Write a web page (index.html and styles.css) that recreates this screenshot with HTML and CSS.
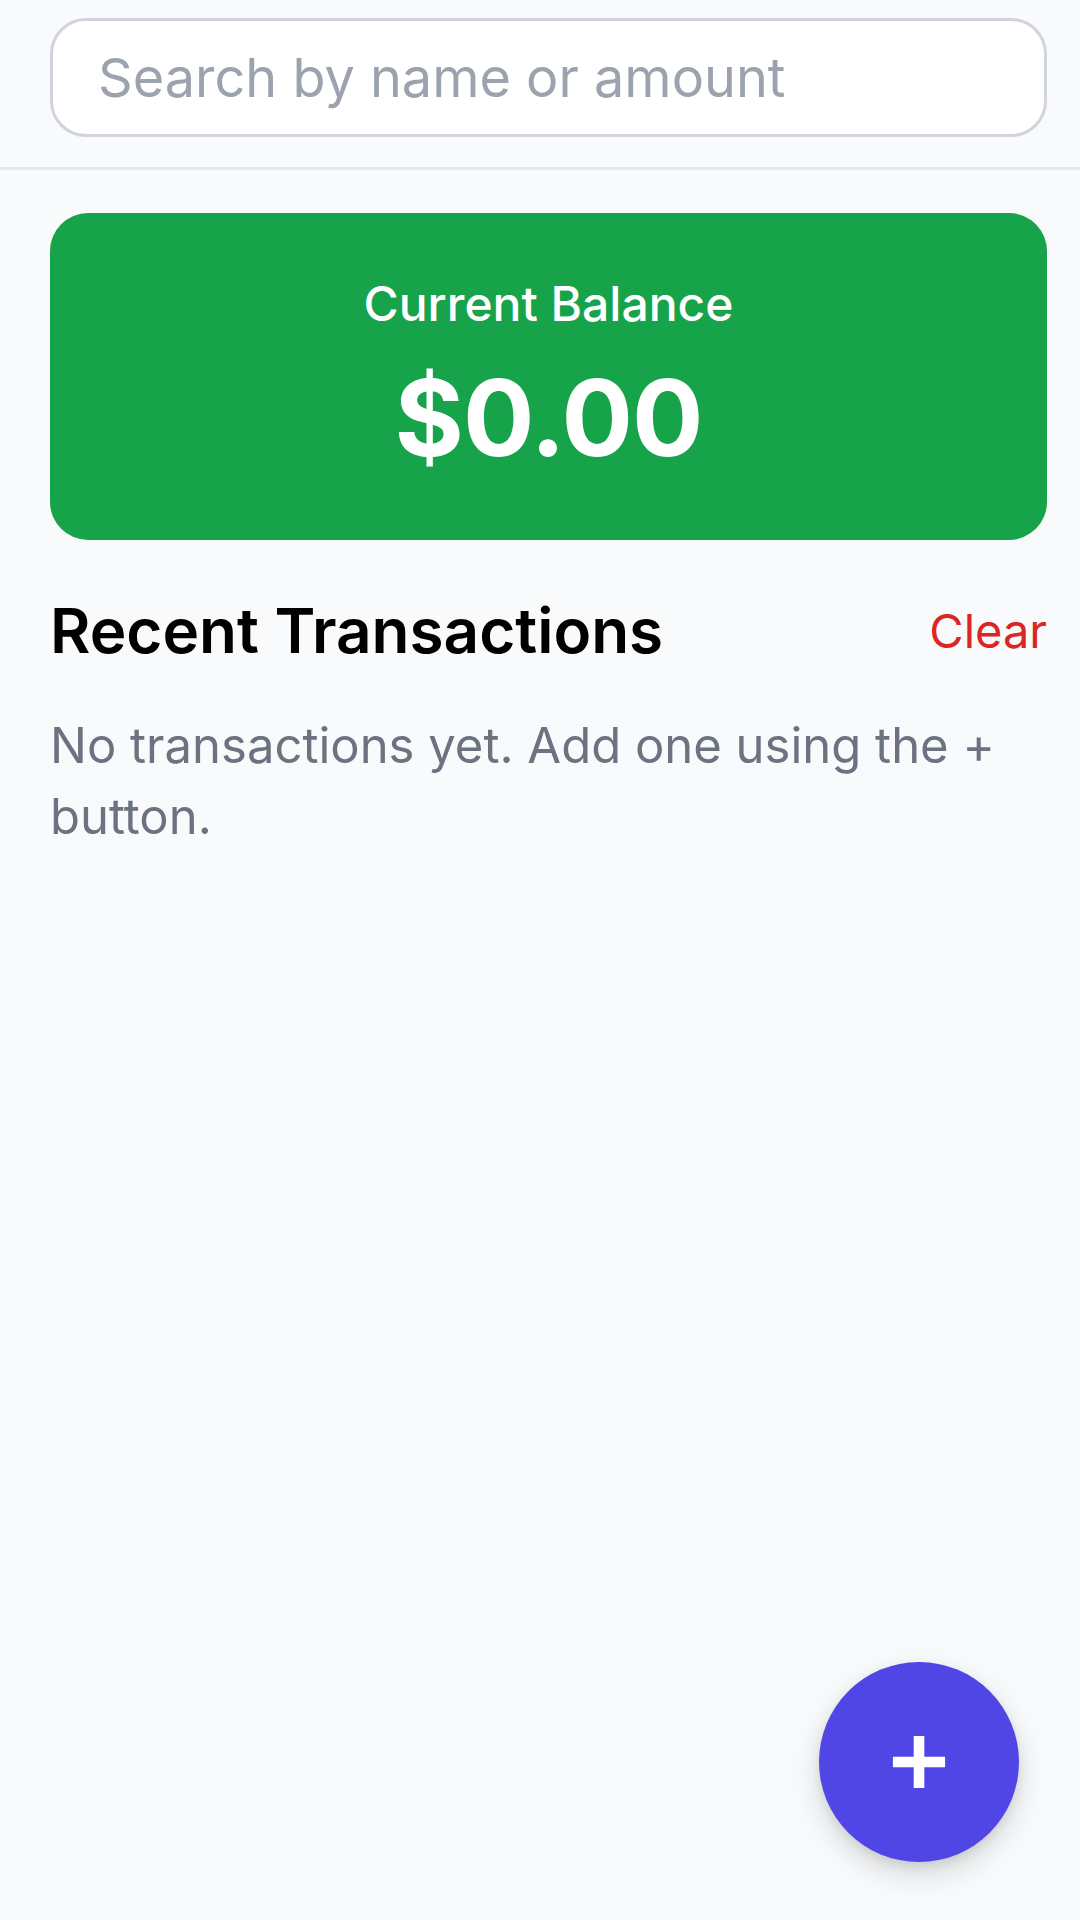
FILE: index.html
```html
<!DOCTYPE html>
<html lang="en">
<head>
<meta charset="utf-8">
<title>Balance</title>
<link rel="stylesheet" href="styles.css">
</head>
<body>
<header class="header">
  <input class="search" type="text" placeholder="Search by name or amount">
</header>
<main class="main">
  <section class="balance-card">
    <div class="balance-label">Current Balance</div>
    <div class="balance-amount">$0.00</div>
  </section>
  <div class="section-head">
    <h2 class="section-title">Recent Transactions</h2>
    <button class="clear-btn" type="button">Clear</button>
  </div>
  <p class="empty">No transactions yet. Add one using the + button.</p>
</main>
<button class="fab" type="button" aria-label="Add transaction">
  <svg viewBox="0 0 60 60" width="60" height="60" aria-hidden="true">
    <path d="M30 3 V57 M3 30 H57" stroke="#ffffff" stroke-width="11" fill="none"/>
  </svg>
</button>
</body>
</html>
```

FILE: styles.css
```css
* { box-sizing: border-box; }
html, body { margin: 0; padding: 0; }
body {
  width: 1080px;
  height: 1920px;
  background: #f9fafb;
  font-family: Inter, "Noto Sans", "Liberation Sans", sans-serif;
  color: #111827;
  overflow: hidden;
  position: relative;
}
.header {
  padding: 18px 33px 30px 50px;
  border-bottom: 3px solid #e5e7eb;
  background: #f9fafb;
}
.search {
  display: block;
  width: 100%;
  height: 119px;
  border: 3px solid #d1d5db;
  border-radius: 36px;
  background: #ffffff;
  padding: 0 45px;
  font-family: inherit;
  font-size: 54px;
  color: #111827;
  outline: none;
}
.search::placeholder { color: #9ca3af; }
.main {
  padding: 43px 33px 0 50px;
}
.balance-card {
  background: #16a34a;
  border-radius: 38px;
  padding: 49px 20px 62px;
  color: #ffffff;
  display: flex;
  flex-direction: column;
  align-items: center;
  gap: 12px;
}
.balance-label {
  font-size: 48px;
  line-height: 84px;
  font-weight: 500;
}
.balance-amount {
  font-size: 106px;
  line-height: 120px;
  font-weight: 700;
  letter-spacing: -1px;
}
.section-head {
  margin-top: 46px;
  display: flex;
  align-items: center;
  justify-content: space-between;
  height: 90px;
}
.section-title {
  margin: 0;
  font-size: 62px;
  line-height: 84px;
  font-weight: 600;
  color: #000000;
}
.clear-btn {
  border: 0;
  background: none;
  padding: 0;
  font-family: inherit;
  font-size: 47px;
  line-height: 72px;
  color: #dc2626;
}
.empty {
  margin: 34px 0 0;
  font-size: 49px;
  line-height: 71px;
  color: #6b7280;
}
.fab {
  position: absolute;
  right: 61px;
  bottom: 58px;
  width: 200px;
  height: 200px;
  border-radius: 50%;
  border: 0;
  background: #4f46e5;
  box-shadow: 0 12px 30px rgba(0,0,0,0.15), 0 4px 10px rgba(0,0,0,0.08);
  display: flex;
  align-items: center;
  justify-content: center;
  padding: 0;
}
.fab svg { width: 58px; height: 58px; display: block; }
```
